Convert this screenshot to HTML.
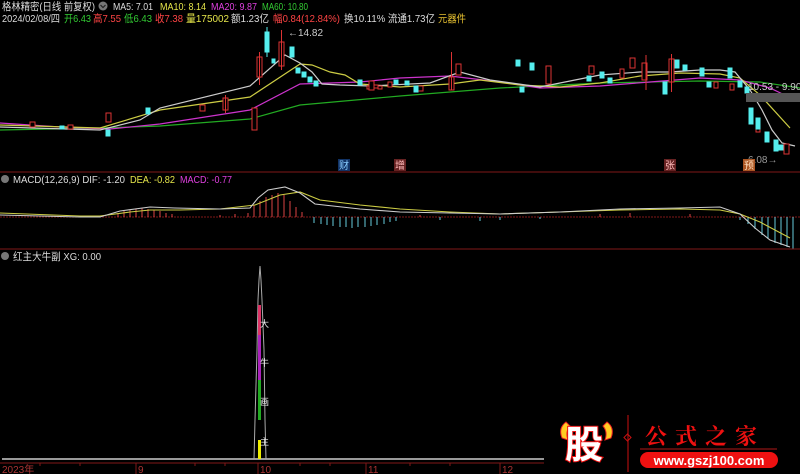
<!DOCTYPE html>
<html><head><meta charset="utf-8"><style>
body{margin:0;background:#000;width:800px;height:474px;overflow:hidden;font-family:"Liberation Sans","Noto Sans CJK SC",sans-serif}
svg{position:absolute;left:0;top:0}
</style></head><body>
<svg width="800" height="474" viewBox="0 0 800 474" font-family="Liberation Sans, Noto Sans CJK SC, sans-serif">
<g font-size="10.5" lengthAdjust="spacingAndGlyphs">
<text x="2" y="10" fill="#ddd" textLength="93" lengthAdjust="spacingAndGlyphs">格林精密(日线 前复权)</text>
<text x="113" y="10" fill="#ddd" textLength="40" lengthAdjust="spacingAndGlyphs">MA5: 7.01</text>
<text x="160" y="10" fill="#e6e64a" textLength="46" lengthAdjust="spacingAndGlyphs">MA10: 8.14</text>
<text x="211" y="10" fill="#e040e0" textLength="46" lengthAdjust="spacingAndGlyphs">MA20: 9.87</text>
<text x="262" y="10" fill="#3c3" textLength="46" lengthAdjust="spacingAndGlyphs">MA60: 10.80</text>
<text x="2" y="22" fill="#ddd" textLength="58" lengthAdjust="spacingAndGlyphs">2024/02/08/四</text>
<text x="64" y="22" fill="#3c3" textLength="27" lengthAdjust="spacingAndGlyphs">开6.43</text>
<text x="93" y="22" fill="#f44" textLength="28" lengthAdjust="spacingAndGlyphs">高7.55</text>
<text x="124" y="22" fill="#3c3" textLength="28" lengthAdjust="spacingAndGlyphs">低6.43</text>
<text x="155" y="22" fill="#f44" textLength="28" lengthAdjust="spacingAndGlyphs">收7.38</text>
<text x="186" y="22" fill="#e6e64a" textLength="43" lengthAdjust="spacingAndGlyphs">量175002</text>
<text x="231" y="22" fill="#ddd" textLength="38" lengthAdjust="spacingAndGlyphs">额1.23亿</text>
<text x="273" y="22" fill="#f44" textLength="67" lengthAdjust="spacingAndGlyphs">幅0.84(12.84%)</text>
<text x="344" y="22" fill="#ddd" textLength="91" lengthAdjust="spacingAndGlyphs">换10.11% 流通1.73亿</text>
<text x="438" y="22" fill="#e6c030" textLength="28" lengthAdjust="spacingAndGlyphs">元器件</text>
</g>
<circle cx="103" cy="6" r="4.5" fill="#777"/><path d="M100.5 5l2.5 2.5 2.5-2.5" stroke="#222" fill="none" stroke-width="1.2"/>

<g fill="none" stroke-width="1.2">
<polyline stroke="#2a2" points="0,130 100,128 160,126 250,119 300,105 400,96 500,88 600,83 700,81 760,82 800,88"/>
<polyline stroke="#c3c" points="0,123 60,127 110,129 160,124 250,110 300,84 360,82 400,78 450,76 500,82 540,88 600,86 650,82 700,78 740,80 770,88 795,100"/>
<polyline stroke="#cc4" points="0,125 100,128 160,110 250,97 300,64 312,65 330,72 345,75 360,84 400,87 450,84 480,80 520,85 560,87 600,83 640,76 680,73 720,74 740,78 760,95 790,128"/>
<polyline stroke="#ccc" points="0,127 100,130 140,120 160,108 250,86 285,55 300,63 312,72 322,84 340,85 370,86 430,83 460,72 490,80 540,87 560,83 600,75 640,72 670,72 700,70 720,70 735,72 750,90 762,110 772,130 782,143 795,146"/>
</g>
<g stroke-width="1">
<g fill="#000" stroke="#d33">
<rect x="257" y="57" width="5" height="20"/><line x1="259.5" y1="52" x2="259.5" y2="85"/>
<rect x="279" y="42" width="5" height="24"/><line x1="281.5" y1="30" x2="281.5" y2="70"/>
<rect x="252" y="108" width="5" height="22"/>
<rect x="223" y="98" width="5" height="12"/><line x1="225.5" y1="95" x2="225.5" y2="113"/>
<rect x="200" y="105" width="5" height="6"/>
<rect x="106" y="113" width="5" height="9"/>
<rect x="449" y="77" width="5" height="13"/><line x1="451.5" y1="52" x2="451.5" y2="90"/>
<rect x="456" y="64" width="5" height="11"/>
<rect x="367" y="86" width="4" height="3"/><rect x="378" y="86" width="4" height="3"/>
<rect x="418" y="86" width="5" height="5"/><rect x="374" y="85" width="4" height="3"/>
<rect x="369" y="81" width="5" height="9"/><rect x="388" y="82" width="4" height="5"/>
<rect x="546" y="66" width="5" height="18"/><rect x="589" y="66" width="5" height="8"/>
<rect x="620" y="69" width="4" height="9"/><rect x="630" y="58" width="5" height="10"/>
<rect x="669" y="59" width="5" height="23"/><line x1="671.5" y1="54" x2="671.5" y2="92"/>
<rect x="714" y="82" width="4" height="6"/><rect x="730" y="84" width="4" height="6"/>
<rect x="642" y="63" width="5" height="17"/><line x1="646" y1="55" x2="646" y2="90"/>
<rect x="756" y="128" width="4" height="4"/><rect x="784" y="144" width="5" height="10"/>
<rect x="30" y="122" width="5" height="5"/><rect x="68" y="125" width="5" height="4"/>
</g>
<g fill="#5ee" stroke="#5ee">
<rect x="265" y="32" width="4" height="20"/><line x1="267" y1="27" x2="267" y2="57"/>
<rect x="272" y="59" width="3" height="4"/>
<rect x="290" y="47" width="4" height="10"/>
<rect x="296" y="68" width="4" height="5"/><rect x="302" y="72" width="4" height="5"/>
<rect x="308" y="77" width="4" height="5"/><rect x="314" y="81" width="4" height="5"/>
<rect x="146" y="108" width="4" height="6"/>
<rect x="106" y="130" width="4" height="6"/>
<rect x="358" y="80" width="4" height="5"/><rect x="394" y="80" width="4" height="4"/>
<rect x="414" y="86" width="4" height="6"/><rect x="405" y="81" width="4" height="4"/>
<rect x="516" y="60" width="4" height="6"/><rect x="530" y="63" width="4" height="7"/>
<rect x="600" y="72" width="4" height="6"/><rect x="663" y="82" width="4" height="12"/>
<rect x="675" y="60" width="4" height="8"/><rect x="683" y="65" width="4" height="5"/>
<rect x="700" y="68" width="4" height="8"/><rect x="728" y="68" width="4" height="10"/>
<rect x="738" y="81" width="4" height="6"/><rect x="745" y="87" width="4" height="6"/>
<rect x="749" y="108" width="4" height="16"/><rect x="756" y="118" width="4" height="11"/>
<rect x="765" y="132" width="4" height="10"/><rect x="774" y="140" width="4" height="11"/>
<rect x="779" y="145" width="4" height="5"/><rect x="707" y="82" width="4" height="5"/>
<rect x="587" y="76" width="4" height="5"/><rect x="608" y="78" width="4" height="5"/>
<rect x="520" y="87" width="4" height="5"/><rect x="60" y="126" width="4" height="3"/>
</g>
</g>
<text x="288" y="36" font-size="10" fill="#ccc">←14.82</text>
<rect x="746" y="93" width="54" height="9" fill="#555"/>
<text x="748" y="90" font-size="10" fill="#ccc">10.53 - 9.90</text>
<text x="748" y="163" font-size="10" fill="#999">6.08→</text>
<rect x="338" y="159" width="12" height="12" fill="#136"/><text x="339" y="169" font-size="10" fill="#8cf">财</text>
<rect x="394" y="159" width="12" height="12" fill="#622"/><text x="395" y="169" font-size="10" fill="#fbb">增</text>
<rect x="664" y="159" width="12" height="12" fill="#622"/><text x="665" y="169" font-size="10" fill="#fbb">张</text>
<rect x="743" y="159" width="12" height="12" fill="#a52"/><text x="744" y="169" font-size="10" fill="#fdb">预</text>

<line x1="0" y1="172" x2="800" y2="172" stroke="#801818"/>
<circle cx="5" cy="179" r="4" fill="#777"/>
<text x="13" y="183" font-size="10.5" fill="#ddd" textLength="112" lengthAdjust="spacingAndGlyphs">MACD(12,26,9)  DIF: -1.20</text>
<text x="130" y="183" font-size="10.5" fill="#e6e64a" textLength="45" lengthAdjust="spacingAndGlyphs">DEA: -0.82</text>
<text x="180" y="183" font-size="10.5" fill="#e040e0" textLength="52" lengthAdjust="spacingAndGlyphs">MACD: -0.77</text>
<line x1="0" y1="217" x2="800" y2="217" stroke="#801818" stroke-dasharray="2,1"/>
<g stroke="#d44" stroke-width="1">
<path d="M118 217v-4M124 217v-6M130 217v-7M136 217v-8M142 217v-9M148 217v-8M154 217v-7M160 217v-6M166 217v-4M172 217v-3M220 217v-2M235 217v-3M248 217v-4M254 217v-12M260 217v-16M266 217v-20M272 217v-22M278 217v-24M284 217v-22M290 217v-16M296 217v-10M302 217v-5M420 217v-2M600 217v-3M630 217v-4M690 217v-3"/>
</g>
<g stroke="#6cd" stroke-width="1">
<path d="M314 217v6M321 217v7M327 217v8M333 217v9M340 217v10M346 217v10M352 217v11M358 217v10M365 217v10M371 217v9M377 217v8M384 217v7M390 217v5M396 217v4M440 217v3M480 217v4M500 217v3M540 217v2M740 217v3M748 217v7M755 217v12M762 217v18M768 217v22M775 217v26M781 217v28M787 217v30M793 217v32"/>
</g>
<g fill="none" stroke-width="1.1">
<polyline stroke="#cc4" points="0,213 80,216 100,216 130,212 150,210 180,210 220,209 255,205 280,195 300,192 320,200 360,205 400,209 450,212 500,214 560,212 620,210 680,209 720,210 740,214 760,222 790,238"/>
<polyline stroke="#ccc" points="0,215 80,217 100,217 120,211 150,207 175,208 220,209 250,208 258,198 268,190 285,187 300,193 315,204 360,209 400,212 450,213 500,214 560,212 620,209 680,208 720,207 740,214 755,228 770,240 790,247"/>
</g>

<line x1="0" y1="249" x2="800" y2="249" stroke="#801818"/>
<circle cx="5" cy="256" r="4" fill="#777"/>
<text x="13" y="260" font-size="10.5" fill="#ddd" textLength="88" lengthAdjust="spacingAndGlyphs">红主大牛副 XG: 0.00</text>
<line x1="2" y1="459" x2="544" y2="459" stroke="#ccc" stroke-width="1.5"/>
<polyline fill="none" stroke="#aaa" stroke-width="1" points="254,459 255,420 257,350 258,300 259,280 260,266 261,280 262,300 264,350 265,420 266,459"/>
<rect x="258" y="305" width="3" height="30" fill="#d36"/>
<rect x="258" y="335" width="3" height="45" fill="#a2b"/>
<rect x="258" y="380" width="3" height="40" fill="#2a2"/>
<rect x="258" y="440" width="3" height="19" fill="#ee0"/>
<text x="260" y="327" font-size="9" fill="#eee">大</text>
<text x="260" y="366" font-size="9" fill="#eee">牛</text>
<text x="260" y="405" font-size="9" fill="#eee">画</text>
<text x="260" y="445" font-size="9" fill="#eee">主</text>
<line x1="0" y1="463" x2="544" y2="463" stroke="#801818"/>
<g stroke="#801818"><path d="M136 463v11M258 463v11M366 463v11M500 463v11M40 463v3M80 463v3M195 463v3M225 463v3M300 463v3M330 463v3M410 463v3M450 463v3"/></g>
<text x="2" y="473" font-size="10" fill="#a33">2023年</text>
<text x="138" y="473" font-size="10" fill="#a33">9</text>
<text x="260" y="473" font-size="10" fill="#a33">10</text>
<text x="368" y="473" font-size="10" fill="#a33">11</text>
<text x="502" y="473" font-size="10" fill="#a33">12</text>

<path d="M566 422q-8 6-4 16l6 2q-3-8 2-14z" fill="#fc2" stroke="#e22"/>
<path d="M607 422q8 6 4 16l-6 2q3-8-2-14z" fill="#fc2" stroke="#e22"/>
<text x="565" y="458" font-size="38" font-weight="bold" fill="#fff" stroke="#e11" stroke-width="2" paint-order="stroke" font-family="Noto Sans CJK SC, sans-serif">股</text>
<line x1="628" y1="415" x2="628" y2="472" stroke="#c11"/>
<rect x="625" y="435" width="5" height="5" fill="none" stroke="#c11" transform="rotate(45 627.5 437.5)"/>
<text x="645" y="444" font-size="22" font-weight="bold" fill="#e11" letter-spacing="8" font-family="Noto Serif CJK SC, serif">公式之家</text>
<line x1="640" y1="449" x2="777" y2="449" stroke="#711" stroke-width="1.5"/>
<rect x="640" y="452" width="138" height="16" rx="8" fill="#e11"/>
<text x="709" y="465" font-size="13" font-weight="bold" fill="#fff" text-anchor="middle">www.gszj100.com</text>
</svg>
</body></html>
